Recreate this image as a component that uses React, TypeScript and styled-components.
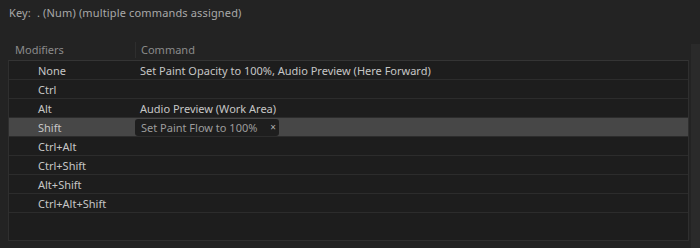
import React from 'react';
import styled, { createGlobalStyle } from 'styled-components';

const Global = createGlobalStyle`
  html, body {
    margin: 0;
    padding: 0;
    background: #232323;
  }
  body {
    font-family: "Noto Sans", "Open Sans", sans-serif;
    font-size: 11px;
  }
`;

const Panel = styled.div`
  width: 700px;
  height: 248px;
  box-sizing: border-box;
  display: flex;
  flex-direction: column;
  background: #232323;
  overflow: hidden;
`;

const KeyLine = styled.div`
  height: 30px;
  padding: 5px 0 0 9px;
  box-sizing: border-box;
  color: #a9a9a9;
  white-space: pre;
  letter-spacing: 0.15px;
`;

const Body = styled.div`
  flex: 1;
  display: flex;
  margin-top: 10px;
`;

const TableArea = styled.div`
  flex: 1;
  display: flex;
  flex-direction: column;
  padding-left: 8px;
`;

const Header = styled.div`
  height: 20px;
  display: grid;
  grid-template-columns: 127px 1fr;
  color: #8b8b8b;
  align-items: center;
`;

const HeadCell = styled.div<{ $divider?: boolean }>`
  padding-left: ${(p) => (p.$divider ? '5px' : '7px')};
  border-left: ${(p) => (p.$divider ? '1px solid #2e2e2e' : 'none')};
  line-height: 16px;
`;

const Table = styled.div`
  height: 179px;
  border: 1px solid #2f2f2f;
  border-top-color: #343434;
  background: #1d1d1d;
  display: flex;
  flex-direction: column;
`;

const Row = styled.div<{ $selected?: boolean }>`
  height: 18px;
  border-bottom: 1px solid #2c2c2c;
  display: grid;
  grid-template-columns: 126px 1fr;
  align-items: center;
  background: ${(p) => (p.$selected ? '#474747' : 'transparent')};
  color: #c6c6c6;
  white-space: nowrap;
`;

const ModCell = styled.div`
  padding-left: 29px;
`;

const CmdCell = styled.div`
  padding-left: 5px;
  display: flex;
  align-items: center;
`;

const Pill = styled.div`
  display: inline-flex;
  align-items: center;
  margin-left: -5px;
  height: 17px;
  width: 144px;
  box-sizing: border-box;
  padding: 0 3px 0 6px;
  background: #1e1e1e;
  border-radius: 3px;
  color: #9c9c9c;
  justify-content: space-between;
`;

const Close = styled.span`
  font-size: 10px;
  color: #b0b0b0;
`;

const Scroll = styled.div`
  width: 9px;
  margin-left: 2px;
  margin-top: 4px;
  background: #2a2a2a;
`;

const rows: { mod: string; cmd?: string; selected?: boolean }[] = [
  { mod: 'None', cmd: 'Set Paint Opacity to 100%, Audio Preview (Here Forward)' },
  { mod: 'Ctrl' },
  { mod: 'Alt', cmd: 'Audio Preview (Work Area)' },
  { mod: 'Shift', selected: true },
  { mod: 'Ctrl+Alt' },
  { mod: 'Ctrl+Shift' },
  { mod: 'Alt+Shift' },
  { mod: 'Ctrl+Alt+Shift' },
];

export default function App() {
  return (
    <Panel>
      <Global />
      <KeyLine>{'Key:  . (Num) (multiple commands assigned)'}</KeyLine>
      <Body>
        <TableArea>
          <Header>
            <HeadCell>Modifiers</HeadCell>
            <HeadCell $divider>Command</HeadCell>
          </Header>
          <Table>
            {rows.map((r) => (
              <Row key={r.mod} $selected={r.selected}>
                <ModCell>{r.mod}</ModCell>
                <CmdCell>
                  {r.selected ? (
                    <Pill>
                      <span>Set Paint Flow to 100%</span>
                      <Close>×</Close>
                    </Pill>
                  ) : (
                    r.cmd
                  )}
                </CmdCell>
              </Row>
            ))}
          </Table>
        </TableArea>
        <Scroll />
      </Body>
    </Panel>
  );
}
